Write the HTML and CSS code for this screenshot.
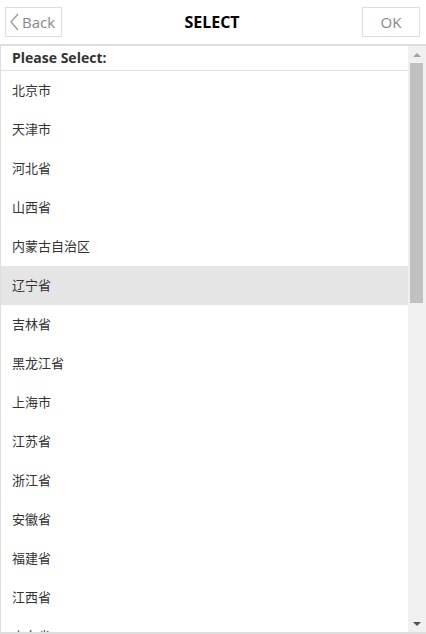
FILE: index.html
```html
<!DOCTYPE html>
<html lang="zh-CN">
<head>
  <title>Select</title>
  <meta charset="UTF-8" />
  <meta name="viewport" content="width=device-width, initial-scale=1.0" />
  <link rel="stylesheet" href="styles.css">
</head>
<body>
  <div class="topbar">
    <button class="btn back-btn">
      <svg class="chev" width="9" height="18" viewBox="0 0 9 18"><path d="M8 1 L1 9 L8 17" fill="none" stroke="#999" stroke-width="1.3"/></svg>
      Back
    </button>
    <h1 class="title">SELECT</h1>
    <button class="btn ok-btn">OK</button>
  </div>

  <div class="picker">
    <div class="list">
      <div class="list-head">Please Select:</div>
      <div class="item">北京市</div>
      <div class="item">天津市</div>
      <div class="item">河北省</div>
      <div class="item">山西省</div>
      <div class="item">内蒙古自治区</div>
      <div class="item active">辽宁省</div>
      <div class="item">吉林省</div>
      <div class="item">黑龙江省</div>
      <div class="item">上海市</div>
      <div class="item">江苏省</div>
      <div class="item">浙江省</div>
      <div class="item">安徽省</div>
      <div class="item">福建省</div>
      <div class="item">江西省</div>
      <div class="item">山东省</div>
      <div class="item">河南省</div>
    </div>
    <div class="scrollbar">
      <div class="arrow up"></div>
      <div class="track">
        <div class="thumb"></div>
      </div>
      <div class="arrow down"></div>
    </div>
  </div>
</body>
</html>
```

FILE: styles.css
```css
:root {
  --line: #dedede;
  --text: #333;
}

html, body {
  height: 100%;
}

body {
  margin: 0;
  font-family: "Open Sans", "Noto Sans CJK SC", sans-serif;
  color: var(--text);
  background: #fff;
  display: flex;
  flex-direction: column;
  overflow: hidden;
}

.topbar {
  height: 44px;
  display: flex;
  align-items: center;
  justify-content: space-between;
  padding: 0 6px 0 5px;
  box-sizing: border-box;
  flex-shrink: 0;
}

.btn {
  height: 30px;
  border: 1px solid var(--line);
  background: #fff;
  color: #888;
  font-family: inherit;
  font-size: 15px;
  padding: 0;
  display: flex;
  align-items: center;
  justify-content: center;
}

.back-btn {
  width: 57px;
  gap: 3px;
  padding-right: 2px;
}

.ok-btn {
  width: 58px;
}

.title {
  margin: 0;
  font-size: 16px;
  font-weight: 700;
  color: #000;
}

.picker {
  flex: 1;
  display: flex;
  border-top: 2px solid var(--line);
  border-bottom: 2px solid var(--line);
  border-left: 1px solid var(--line);
  min-height: 0;
}

.list {
  flex: 1;
  overflow: hidden;
}

.list-head {
  height: 24px;
  line-height: 24px;
  padding-left: 11px;
  font-size: 14px;
  font-weight: 700;
  border-bottom: 1px solid var(--line);
}

.item {
  height: 39px;
  line-height: 38px;
  padding-left: 11px;
  font-size: 13px;
}

.item.active {
  background: #e5e5e5;
}

.scrollbar {
  width: 18px;
  background: #f0f0f0;
  display: flex;
  flex-direction: column;
  align-items: center;
}

.arrow {
  height: 17px;
  width: 100%;
  display: flex;
  align-items: center;
  justify-content: center;
}

.arrow::after {
  content: "";
  border-left: 4px solid transparent;
  border-right: 4px solid transparent;
}

.up::after {
  border-bottom: 4px solid #a3a3a3;
}

.down::after {
  border-top: 4px solid #505050;
}

.track {
  flex: 1;
  width: 100%;
  padding-left: 2px;
  padding-right: 3px;
  box-sizing: border-box;
}

.thumb {
  height: 240px;
  background: #c1c1c1;
}
```
